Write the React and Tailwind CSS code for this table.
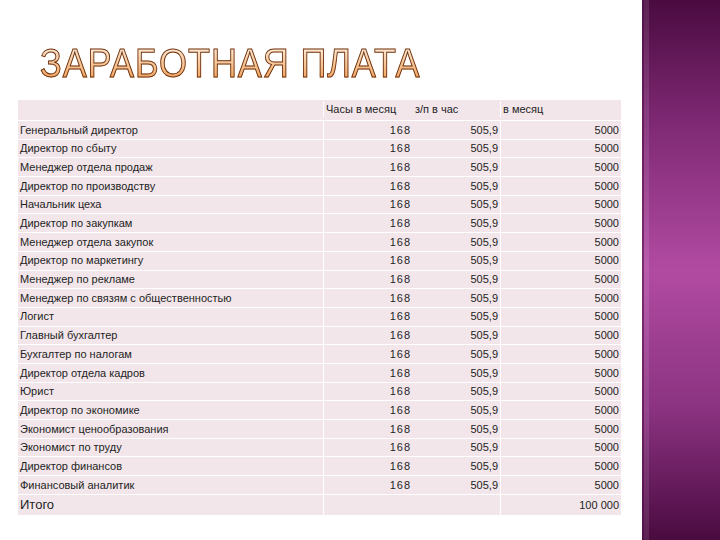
const rows = [
  "Генеральный директор",
  "Директор по сбыту",
  "Менеджер отдела продаж",
  "Директор по производству",
  "Начальник цеха",
  "Директор по закупкам",
  "Менеджер отдела закупок",
  "Директор по маркетингу",
  "Менеджер по рекламе",
  "Менеджер по связям с общественностью",
  "Логист",
  "Главный бухгалтер",
  "Бухгалтер по налогам",
  "Директор отдела кадров",
  "Юрист",
  "Директор по экономике",
  "Экономист ценообразования",
  "Экономист по труду",
  "Директор финансов",
  "Финансовый аналитик",
];

const grid = "grid grid-cols-[305px_90px_87px_121px]";

export default function App() {
  return (
    <main
      className="w-[720px] h-[540px] flex bg-white overflow-hidden text-[#1e1e1e]"
      style={{ fontFamily: '"Liberation Sans", Arial, sans-serif' }}
    >
      <section className="w-[642px] pl-[18px]">
        {/* title */}
        <div className="pt-[43px] pl-[22px] h-[100px]">
          <h1 className="inline-block origin-left scale-x-[0.9] text-[40px] leading-[40px] tracking-[1px] bg-gradient-to-b from-[#fff3e6] via-[#f8c89a] to-[#ee9a4c] bg-clip-text text-transparent [-webkit-text-stroke:1px_#6e3514] whitespace-nowrap">
            ЗАРАБОТНАЯ ПЛАТА
          </h1>
        </div>

        {/* table */}
        <div className="w-[603px] bg-[#f2e6ea] text-[11px]">
          <div className={`${grid} h-[21px] items-end pb-[3px] border-b border-white`}>
            <div />
            <div className="pl-[2px] border-l border-white">Часы в месяц</div>
            <div className="pl-[2px]">з/п в час</div>
            <div className="pl-[2px] border-l border-white">в месяц</div>
          </div>
          {rows.map((name) => (
            <div key={name} className={`${grid} h-[18.7px] items-center border-b border-white`}>
              <div className="pl-[2px] whitespace-nowrap">{name}</div>
              <div className="h-full flex items-center justify-end pr-[2px] tracking-[1px] border-l border-white">168</div>
              <div className="text-right pr-[2px]">505,9</div>
              <div className="h-full flex items-center justify-end pr-[2px] border-l border-white">5000</div>
            </div>
          ))}
          <div className={`${grid} h-[20px] items-center`}>
            <div className="pl-[2px] text-[13px]">Итого</div>
            <div className="h-full border-l border-white" />
            <div />
            <div className="h-full flex items-center justify-end pr-[2px] border-l border-white">100 000</div>
          </div>
        </div>
      </section>

      {/* decorative side panel */}
      <aside className="flex-1 flex bg-[linear-gradient(to_bottom,#4a0b40_0%,#7d2872_22%,#b14ba2_50%,#8a3280_76%,#4a0b40_100%)]">
        <div className="w-[2px] bg-[#5a1550]/60" />
        <div className="w-[5px] bg-white/10" />
        <div className="flex-1" />
      </aside>
    </main>
  );
}
